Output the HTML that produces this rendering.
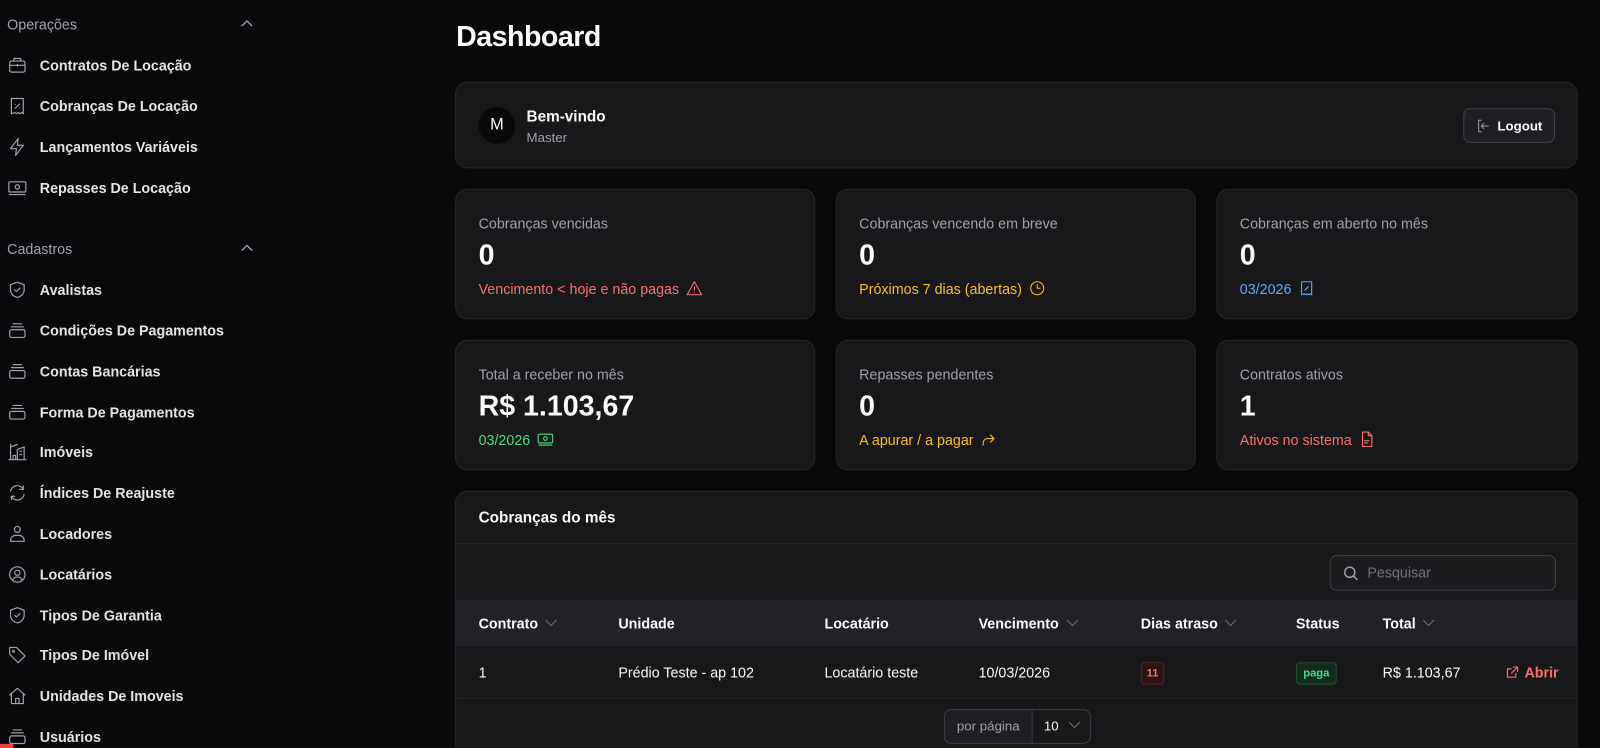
<!DOCTYPE html>
<html><head><meta charset="utf-8"><style>
*{box-sizing:border-box;margin:0;padding:0}
html,body{width:1600px;height:748px;overflow:hidden;background:#09090b}
#w{position:absolute;left:0;top:0;width:1568px;height:733px;overflow:hidden;transform:scale(1.0204);transform-origin:0 0;font-family:"Liberation Sans",sans-serif;color:#fafafa}
.sb{position:absolute;left:0;top:0;width:260px;height:733px}
.sh{position:absolute;left:7px;font-size:14px;color:#a1a1aa}
.chev{position:absolute;left:236px;width:12px;height:8px}
.it{position:absolute;left:0;height:24px;display:flex;align-items:center;font-size:14px;font-weight:bold;color:#e4e4e7}
.it svg{position:absolute;left:7px;width:20px;height:20px;fill:none;stroke:#a1a1aa;stroke-width:1.4;stroke-linecap:round;stroke-linejoin:round}
.it span{position:absolute;left:39px;white-space:nowrap}
.card{position:absolute;background:#18181b;border:1px solid #27272a;border-radius:12px}
h1{position:absolute;left:447px;top:20px;font-size:28px;font-weight:bold;letter-spacing:-0.5px}
.lbl{position:absolute;left:22px;top:25px;font-size:14px;color:#a1a1aa}
.val{position:absolute;left:22px;top:48px;font-size:28px;font-weight:bold}
.sub{position:absolute;left:22px;top:88px;font-size:14px;display:flex;align-items:center;gap:6px}
.sub svg{width:17px;height:17px;fill:none;stroke:currentColor;stroke-width:1.5;stroke-linecap:round;stroke-linejoin:round}
.th{position:absolute;top:0;height:44px;line-height:44px;font-size:14px;font-weight:bold;color:#fafafa}
.td{position:absolute;top:0;height:50px;line-height:50px;font-size:14px;color:#fafafa}
.dn{display:inline-block;width:8px;height:8px;border-right:1px solid #71717a;border-bottom:1px solid #71717a;transform:rotate(45deg);margin-left:9px;position:relative;top:-4px}
</style></head><body><div id="w">
<div class="sb">
<div class="sh" style="top:16px">Operações</div>
<svg class="chev" style="top:19px" viewBox="0 0 12 8"><path d="M1 6.5L6 1.5L11 6.5" stroke="#a1a1aa" stroke-width="1.3" fill="none"/></svg>
<div class="it" style="top:52px"><svg viewBox="0 0 24 24"><rect x="3" y="7" width="18" height="13" rx="2"/><path d="M8 7V4h8v3M3 12h18M12 11v2"/></svg><span>Contratos De Locação</span></div>
<div class="it" style="top:92px"><svg viewBox="0 0 24 24"><path d="M5 3h14v18l-2-1.5-2 1.5-2-1.5-2 1.5-2-1.5L5 21z"/><path d="M9.5 14.5l5-5M9.5 10h.01M14.5 14h.01"/></svg><span>Cobranças De Locação</span></div>
<div class="it" style="top:132px"><svg viewBox="0 0 24 24"><path d="M13 2L4 14h7l-1 8 9-12h-7z"/></svg><span>Lançamentos Variáveis</span></div>
<div class="it" style="top:172px"><svg viewBox="0 0 24 24"><rect x="2" y="5" width="20" height="12" rx="1.5"/><circle cx="12" cy="11" r="2.5"/><path d="M3 20h18"/></svg><span>Repasses De Locação</span></div>
<div class="sh" style="top:236px">Cadastros</div>
<svg class="chev" style="top:239px" viewBox="0 0 12 8"><path d="M1 6.5L6 1.5L11 6.5" stroke="#a1a1aa" stroke-width="1.3" fill="none"/></svg>
<div class="it" style="top:272px"><svg viewBox="0 0 24 24"><path d="M12 3l8 3v6c0 5-4 8-8 9-4-1-8-4-8-9V6z"/><path d="M9 12l2 2 4-4"/></svg><span>Avalistas</span></div>
<div class="it" style="top:312px"><svg viewBox="0 0 24 24"><path d="M7 4h10M5 7.5h14"/><rect x="3" y="11" width="18" height="9" rx="2"/></svg><span>Condições De Pagamentos</span></div>
<div class="it" style="top:352px"><svg viewBox="0 0 24 24"><path d="M7 4h10M5 7.5h14"/><rect x="3" y="11" width="18" height="9" rx="2"/></svg><span>Contas Bancárias</span></div>
<div class="it" style="top:392px"><svg viewBox="0 0 24 24"><path d="M7 4h10M5 7.5h14"/><rect x="3" y="11" width="18" height="9" rx="2"/></svg><span>Forma De Pagamentos</span></div>
<div class="it" style="top:431px"><svg viewBox="0 0 24 24"><path d="M2 21h20M4 21V3M4 6l8-3M12 21V9l8-3v15M7 21v-5h3v5M15 11h2M15 15h2"/></svg><span>Imóveis</span></div>
<div class="it" style="top:471px"><svg viewBox="0 0 24 24"><path d="M4 10a8 8 0 0 1 15-2M20 14a8 8 0 0 1-15 2M19 4v4h-4M5 20v-4h4"/></svg><span>Índices De Reajuste</span></div>
<div class="it" style="top:511px"><svg viewBox="0 0 24 24"><circle cx="12" cy="7" r="3.5"/><path d="M4 21v-1a6 6 0 0 1 6-6h4a6 6 0 0 1 6 6v1z"/></svg><span>Locadores</span></div>
<div class="it" style="top:551px"><svg viewBox="0 0 24 24"><circle cx="12" cy="12" r="9"/><circle cx="12" cy="10" r="3"/><path d="M6.5 18.5a6 6 0 0 1 11 0"/></svg><span>Locatários</span></div>
<div class="it" style="top:591px"><svg viewBox="0 0 24 24"><path d="M12 3l8 3v6c0 5-4 8-8 9-4-1-8-4-8-9V6z"/><path d="M9 12l2 2 4-4"/></svg><span>Tipos De Garantia</span></div>
<div class="it" style="top:630px"><svg viewBox="0 0 24 24"><path d="M3 3h8l10 10-8 8L3 11z"/><circle cx="7.5" cy="7.5" r="1"/></svg><span>Tipos De Imóvel</span></div>
<div class="it" style="top:670px"><svg viewBox="0 0 24 24"><path d="M3 11l9-8 9 8M5 9v12h14V9M10 21v-6h4v6"/></svg><span>Unidades De Imoveis</span></div>
<div class="it" style="top:710px"><svg viewBox="0 0 24 24"><path d="M7 4h10M5 7.5h14"/><rect x="3" y="11" width="18" height="9" rx="2"/></svg><span>Usuários</span></div>
<div style="position:absolute;left:0;top:729px;width:13px;height:4px;background:#ef4444"></div>
</div>

<h1>Dashboard</h1>

<div class="card" style="left:446px;top:80px;width:1100px;height:85px">
<div style="position:absolute;left:22px;top:24px;width:36px;height:36px;border-radius:50%;background:#09090b;text-align:center;line-height:36px;font-size:16px">M</div>
<div style="position:absolute;left:69px;top:25px;font-size:15px;font-weight:bold">Bem-vindo</div>
<div style="position:absolute;left:69px;top:46px;font-size:13px;color:#a1a1aa">Master</div>
<div style="position:absolute;right:21px;top:25px;width:90px;height:34px;border:1px solid #3f3f46;border-radius:7px;background:#1f1f23;display:flex;align-items:center;justify-content:center;gap:6px;font-size:13px;font-weight:bold">
<svg width="15" height="15" viewBox="0 0 24 24" fill="none" stroke="#a1a1aa" stroke-width="1.5" stroke-linecap="round"><path d="M9 3H5v18h4M20 12H9M13 8l-4 4 4 4"/></svg>Logout</div>
</div>

<div class="card" style="left:446px;top:185px;width:353px;height:128px"><div class="lbl">Cobranças vencidas</div><div class="val">0</div><div class="sub" style="color:#f87171">Vencimento &lt; hoje e não pagas <svg viewBox="0 0 24 24"><path d="M12 3L2 21h20z"/><path d="M12 10v5M12 18h.01"/></svg></div></div>
<div class="card" style="left:819px;top:185px;width:353px;height:128px"><div class="lbl">Cobranças vencendo em breve</div><div class="val">0</div><div class="sub" style="color:#fbbf24">Próximos 7 dias (abertas) <svg viewBox="0 0 24 24"><circle cx="12" cy="12" r="9"/><path d="M12 7v5h4"/></svg></div></div>
<div class="card" style="left:1192px;top:185px;width:354px;height:128px"><div class="lbl">Cobranças em aberto no mês</div><div class="val">0</div><div class="sub" style="color:#60a5fa">03/2026 <svg viewBox="0 0 24 24"><path d="M5 3h14v18l-2-1.5-2 1.5-2-1.5-2 1.5-2-1.5L5 21z"/><path d="M9.5 14.5l5-5"/></svg></div></div>

<div class="card" style="left:446px;top:333px;width:353px;height:128px"><div class="lbl">Total a receber no mês</div><div class="val">R$ 1.103,67</div><div class="sub" style="color:#4ade80">03/2026 <svg viewBox="0 0 24 24"><rect x="2" y="5" width="20" height="12" rx="1.5"/><circle cx="12" cy="11" r="2.5"/><path d="M3 20h18"/></svg></div></div>
<div class="card" style="left:819px;top:333px;width:353px;height:128px"><div class="lbl">Repasses pendentes</div><div class="val">0</div><div class="sub" style="color:#fbbf24">A apurar / a pagar <svg viewBox="0 0 24 24"><path d="M15 6l5 5-5 5M20 11h-9a6 6 0 0 0-6 6v3"/></svg></div></div>
<div class="card" style="left:1192px;top:333px;width:354px;height:128px"><div class="lbl">Contratos ativos</div><div class="val">1</div><div class="sub" style="color:#f87171">Ativos no sistema <svg viewBox="0 0 24 24"><path d="M6 2h8l5 5v15H6z"/><path d="M14 2v5h5M9 14h6M9 17h4"/></svg></div></div>

<div class="card" style="left:446px;top:481px;width:1100px;height:280px;overflow:hidden">
<div style="position:absolute;left:22px;top:17px;font-size:15px;font-weight:bold">Cobranças do mês</div>
<div style="position:absolute;left:0;top:50px;width:100%;border-top:1px solid #27272a"></div>
<div style="position:absolute;left:856px;top:62px;width:222px;height:35px;border:1px solid #3f3f46;border-radius:7px;background:#1c1c1f;font-size:14px;color:#71717a;line-height:33px;padding-left:36px">
<svg style="position:absolute;left:11px;top:8px" width="17" height="17" viewBox="0 0 24 24" fill="none" stroke="#a1a1aa" stroke-width="2" stroke-linecap="round"><circle cx="11" cy="11" r="7"/><path d="M16 16l5 5"/></svg>Pesquisar</div>
<div style="position:absolute;left:0;top:106px;width:100%;height:45px;background:#222226;border-top:1px solid #27272a;border-bottom:1px solid #27272a">
<div class="th" style="left:22px">Contrato<i class="dn"></i></div>
<div class="th" style="left:159px">Unidade</div>
<div class="th" style="left:361px">Locatário</div>
<div class="th" style="left:512px">Vencimento<i class="dn"></i></div>
<div class="th" style="left:671px">Dias atraso<i class="dn"></i></div>
<div class="th" style="left:823px">Status</div>
<div class="th" style="left:908px">Total<i class="dn"></i></div>
</div>
<div style="position:absolute;left:0;top:152px;width:100%;height:51px;border-bottom:1px solid #27272a">
<div class="td" style="left:22px">1</div>
<div class="td" style="left:159px">Prédio Teste - ap 102</div>
<div class="td" style="left:361px">Locatário teste</div>
<div class="td" style="left:512px">10/03/2026</div>
<div style="position:absolute;left:671px;top:15px;width:23px;height:22px;border:1px solid #5b2424;background:#2a1414;border-radius:4px;color:#f87171;font-size:11px;font-weight:bold;text-align:center;line-height:20px">11</div>
<div style="position:absolute;left:823px;top:15px;width:40px;height:22px;border:1px solid #1f5132;background:#132a1c;border-radius:4px;color:#4ade80;font-size:11px;font-weight:bold;text-align:center;line-height:20px">paga</div>
<div class="td" style="left:908px">R$ 1.103,67</div>
<div class="td" style="left:1028px;color:#f87171;font-weight:bold;display:flex;align-items:center;gap:5px"><svg width="14" height="14" viewBox="0 0 24 24" fill="none" stroke="#f87171" stroke-width="2" stroke-linecap="round"><path d="M14 3h7v7M21 3L11 13M18 14v6H4V6h6"/></svg>Abrir</div>
</div>
<div style="position:absolute;left:478px;top:213px;width:144px;height:34px;border:1px solid #3f3f46;border-radius:7px;font-size:13px;display:flex">
<div style="width:86px;border-right:1px solid #3f3f46;background:#1f1f23;color:#a1a1aa;text-align:center;line-height:32px;border-radius:7px 0 0 7px">por página</div>
<div style="padding-left:11px;line-height:32px">10<i class="dn" style="margin-left:12px"></i></div>
</div>
</div>
</div></body></html>
